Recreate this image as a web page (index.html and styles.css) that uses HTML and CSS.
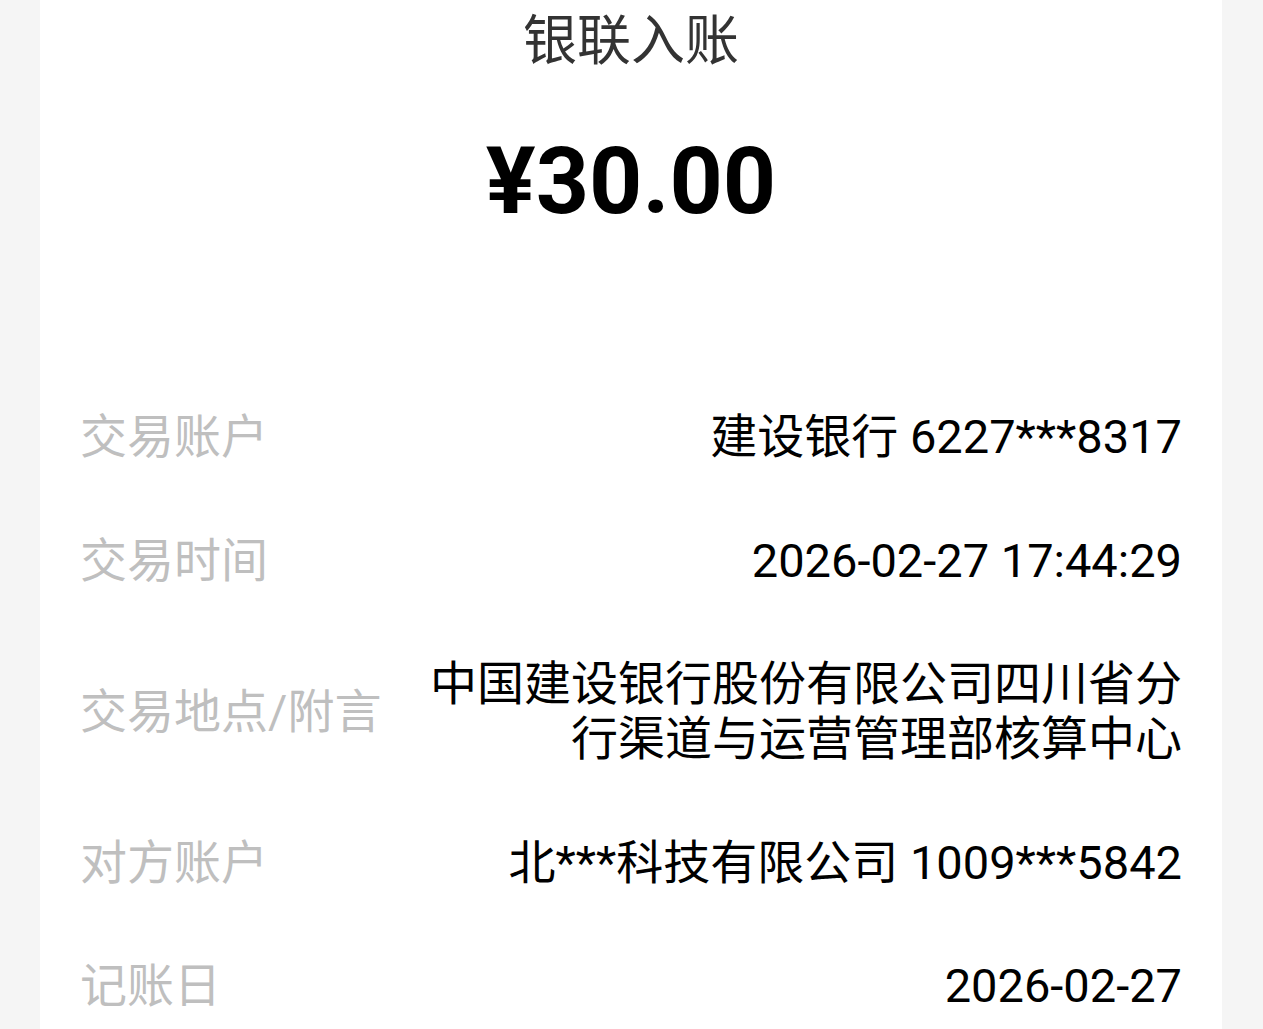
FILE: index.html
```html
<!DOCTYPE html>
<html lang="zh-CN">
<head>
    <meta charset="UTF-8">
    <meta name="viewport" content="width=device-width, initial-scale=1.0">
    <title>银联入账</title>
    <link rel="stylesheet" href="styles.css">
</head>
<body>
    <main class="receipt">
        <h1 class="receipt-title">银联入账</h1>
        <div class="receipt-amount">¥30.00</div>

        <dl class="detail-list">
            <div class="detail-row">
                <dt class="detail-label">交易账户</dt>
                <dd class="detail-value">建设银行 6227***8317</dd>
            </div>
            <div class="detail-row">
                <dt class="detail-label">交易时间</dt>
                <dd class="detail-value">2026-02-27 17:44:29</dd>
            </div>
            <div class="detail-row">
                <dt class="detail-label">交易地点/附言</dt>
                <dd class="detail-value">中国建设银行股份有限公司四川省分行渠道与运营管理部核算中心</dd>
            </div>
            <div class="detail-row">
                <dt class="detail-label">对方账户</dt>
                <dd class="detail-value">北***科技有限公司 1009***5842</dd>
            </div>
            <div class="detail-row">
                <dt class="detail-label">记账日</dt>
                <dd class="detail-value">2026-02-27</dd>
            </div>
        </dl>
    </main>
</body>
</html>
```

FILE: styles.css
```css
body {
    margin: 0;
    padding: 0 41px 0 40px;
    background-color: #f5f5f5;
    font-family: Roboto, "Noto Sans CJK SC", sans-serif;
    color: #000000;
}

.receipt {
    background-color: #ffffff;
    padding: 6px 40px 0;
    min-height: 1100px;
}

.receipt-title {
    margin: 0;
    font-size: 54px;
    font-weight: normal;
    line-height: 72px;
    text-align: center;
    color: #333333;
}

.receipt-amount {
    margin-top: 48px;
    font-size: 93px;
    font-weight: bold;
    line-height: 112px;
    text-align: center;
}

.detail-list {
    margin: 137px 0 0;
    padding: 0;
}

.detail-row {
    display: flex;
    align-items: center;
    justify-content: space-between;
    padding: 34px 0 34.5px;
    font-size: 47px;
    line-height: 55px;
}

.detail-label {
    flex-shrink: 0;
    margin: 0;
    color: #bfbfbf;
}

.detail-value {
    margin: 0 0 0 40px;
    text-align: right;
}
```
